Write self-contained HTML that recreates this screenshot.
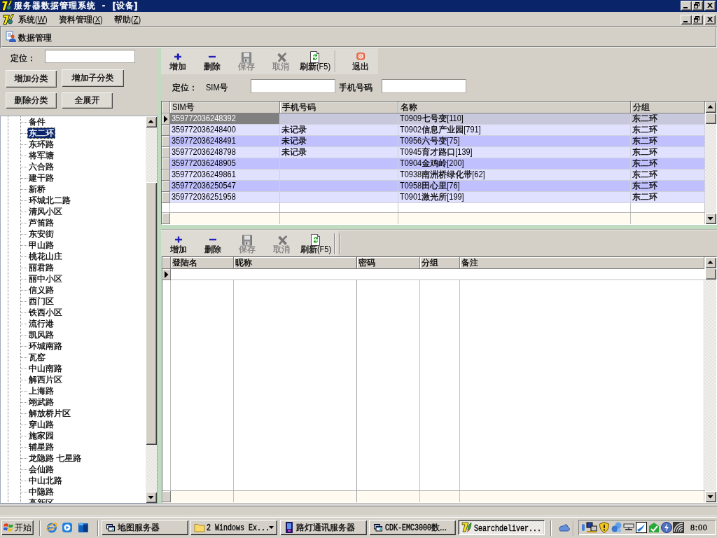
<!DOCTYPE html><html><head><meta charset="utf-8"><title>服务器数据管理系统</title><style>
html,body{margin:0;padding:0;background:#d4d0c8;overflow:hidden;}
body{width:717px;height:538px;position:relative;}
#s{position:absolute;left:0;top:0;width:1024px;height:768px;transform-origin:0 0;transform:scale(0.70019,0.70052);will-change:transform;background:#d4d0c8;font-family:"Liberation Sans","WenQuanYi Zen Hei","Noto Sans CJK SC",sans-serif;font-size:12px;color:#000;overflow:hidden;line-height:14px;-webkit-text-stroke:0.3px currentColor;}
#s div,#s span{position:absolute;box-sizing:border-box;white-space:nowrap;}
#s span.t{position:static;}
.raised{background:#d4d0c8;box-shadow:inset 1px 1px 0 #fff,inset -1px -1px 0 #404040,inset 2px 2px 0 #d4d0c8,inset -2px -2px 0 #808080;}
.raised2{background:#d4d0c8;box-shadow:inset 1px 1px 0 #d4d0c8,inset -1px -1px 0 #404040,inset 2px 2px 0 #fff,inset -2px -2px 0 #808080;}
.sunken{background:#fff;box-shadow:inset 1px 1px 0 #808080,inset -1px -1px 0 #fff,inset 2px 2px 0 #404040,inset -2px -2px 0 #d4d0c8;}
.btn{text-align:center;line-height:24px;}
.pb{background:#dedbd5;box-shadow:inset 1px 1px 0 #f6f5f2,inset -1px -1px 0 #484848,inset -2px -2px 0 #b4b0a8;}
.inp{background:#fff;border:1px solid #908e88;border-right-color:#a8a6a0;border-bottom-color:#a8a6a0;}
.gr{background:#fff;border:1px solid #686868;border-right-color:#fff;border-bottom-color:#fff;overflow:hidden;}
.cb{width:16px;height:14px;}
.sb{background-color:#e2dfd9;background-image:linear-gradient(45deg,#f6f5f3 25%,transparent 25%,transparent 75%,#f6f5f3 75%),linear-gradient(45deg,#f6f5f3 25%,transparent 25%,transparent 75%,#f6f5f3 75%);background-size:2px 2px;background-position:0 0,1px 1px;}
.sbb{width:16px;height:16px;}
.hd{background:#d4d0c8;border-right:1px solid #808080;border-bottom:1px solid #808080;box-shadow:inset 1px 1px 0 #fff;height:17px;top:0;line-height:17px;padding-left:3px;overflow:hidden;}
.ind{background:#d4d0c8;border-right:1px solid #808080;border-bottom:1px solid #808080;box-shadow:inset 1px 1px 0 #fff;left:0;width:13px;height:16px;}
.c{height:16px;line-height:15px;padding-left:2px;border-right:1px solid #d0d0dc;border-bottom:1px solid #d0d0dc;overflow:hidden;}
.tl{font-size:12px;text-align:center;line-height:14px;}
.dis{color:#808080;}
u{text-decoration:underline;}
#s span.l{font-size:11px;display:inline-block;transform:scaleY(1.2);transform-origin:0 75%;-webkit-text-stroke:0;}
</style></head><body><div id="s">
<div style="left:0;top:0;width:1024px;height:17px;background:#0a246a;"></div>
<svg style="position:absolute;left:2px;top:0px" width="16" height="16" viewBox="0 0 16 16"><path d="M1 1.500h8.500l-4.500 13.500h-4l3.500-10.500h-3.500z" fill="#f8f000" stroke="#201800" stroke-width="1"/><path d="M13 0.500h2.500l-4.500 9h-2.500z" fill="#f8f000" stroke="#201800" stroke-width="0.800"/><circle cx="10.500" cy="11" r="3" fill="#2a9a50" stroke="#103060" stroke-width="0.800"/><path d="M9 10.500a2 2 0 0 1 3 0" stroke="#4060d0" stroke-width="1.200" fill="none"/></svg>
<div style="left:20px;top:0px;color:#fff;font-weight:bold;font-size:12px;line-height:16px;letter-spacing:1px;-webkit-text-stroke:0.5px #fff">服务器数据管理系统<span class="t" style="margin:0 10px 0 9px">-</span>[设备]</div>
<div class="raised cb" style="left:972px;top:1px"><div style="left:4px;top:9px;width:6px;height:2px;background:#000"></div></div>
<div class="raised cb" style="left:988px;top:1px"><div style="left:5px;top:2px;width:6px;height:6px;border:1px solid #000;border-top-width:2px"></div><div style="left:3px;top:5px;width:6px;height:6px;border:1px solid #000;border-top-width:2px;background:#d4d0c8"></div></div>
<div class="raised cb" style="left:1006px;top:1px"><svg style="position:absolute;left:4px;top:3px" width="8" height="7" viewBox="0 0 8 7"><path d="M0 0h2l2 2 2-2h2l-3 3.5 3 3.5h-2l-2-2-2 2h-2l3-3.5z" fill="#000"/></svg></div>
<svg style="position:absolute;left:4px;top:20px" width="16" height="16" viewBox="0 0 16 16"><path d="M1 1.500h8.500l-4.500 13.500h-4l3.500-10.500h-3.500z" fill="#f8f000" stroke="#201800" stroke-width="1"/><path d="M13 0.500h2.500l-4.500 9h-2.500z" fill="#f8f000" stroke="#201800" stroke-width="0.800"/><circle cx="10.500" cy="11" r="3" fill="#2a9a50" stroke="#103060" stroke-width="0.800"/><path d="M9 10.500a2 2 0 0 1 3 0" stroke="#4060d0" stroke-width="1.200" fill="none"/></svg>
<div style="left:26px;top:20px;line-height:16px">系统<span class="t l">(<u>W</u>)</span></div>
<div style="left:84px;top:20px;line-height:16px">资料管理<span class="t l">(<u>X</u>)</span></div>
<div style="left:163px;top:20px;line-height:16px">帮助<span class="t l">(<u>Z</u>)</span></div>
<div class="raised cb" style="left:972px;top:21px"><div style="left:4px;top:9px;width:6px;height:2px;background:#000"></div></div>
<div class="raised cb" style="left:988px;top:21px"><div style="left:5px;top:2px;width:6px;height:6px;border:1px solid #000;border-top-width:2px"></div><div style="left:3px;top:5px;width:6px;height:6px;border:1px solid #000;border-top-width:2px;background:#d4d0c8"></div></div>
<div class="raised cb" style="left:1006px;top:21px"><svg style="position:absolute;left:4px;top:3px" width="8" height="7" viewBox="0 0 8 7"><path d="M0 0h2l2 2 2-2h2l-3 3.5 3 3.5h-2l-2-2-2 2h-2l3-3.5z" fill="#000"/></svg></div>
<div style="left:0;top:37px;width:1024px;height:31px;box-shadow:inset 1px 1px 0 #808080,inset -1px -1px 0 #f2f1ee,inset 2px 2px 0 #f2f1ee,inset -2px -2px 0 #808080"></div>
<svg style="position:absolute;left:7px;top:44px" width="16" height="17" viewBox="0 0 16 17"><rect x="2" y="1" width="9" height="12" fill="#fff" stroke="#5080c0" stroke-width="1"/><path d="M4 4h5M4 6h5M4 8h5" stroke="#7090c0" stroke-width="1"/><circle cx="11" cy="8" r="2.5" fill="#e05020"/><path d="M6 16c0-4 2-5 5-5s5 1 5 5z" fill="#3060c0"/></svg>
<div style="left:26px;top:46px;line-height:16px">数据管理</div>
<div style="left:15px;top:75px;line-height:16px">定位：</div>
<div class="inp" style="left:64px;top:71px;width:129px;height:19px"></div>
<div class="pb btn" style="left:8px;top:100px;width:73px;height:25px">增加分类</div>
<div class="pb btn" style="left:88px;top:99px;width:89px;height:25px">增加子分类</div>
<div class="pb btn" style="left:8px;top:132px;width:73px;height:23px;line-height:22px">删除分类</div>
<div class="pb btn" style="left:88px;top:132px;width:73px;height:23px;line-height:22px">全展开</div>
<div style="left:0;top:165px;width:225px;height:554px;overflow:hidden;background:#fff;border:1px solid #a0a8b8">
<div style="left:10px;top:0;width:1px;height:552px;background-image:linear-gradient(to bottom,#808080 50%,transparent 50%);background-size:1px 2px;"></div>
<div style="left:28px;top:0;width:1px;height:552px;background-image:linear-gradient(to bottom,#808080 50%,transparent 50%);background-size:1px 2px;"></div>
<div style="left:29px;top:8px;width:9px;height:1px;background-image:linear-gradient(to right,#989898 50%,transparent 50%);background-size:2px 1px;"></div>
<div style="left:38px;top:0px;height:16px;line-height:16px;padding:0 2px;">备件</div>
<div style="left:29px;top:24px;width:9px;height:1px;background-image:linear-gradient(to right,#989898 50%,transparent 50%);background-size:2px 1px;"></div>
<div style="left:38px;top:16px;height:16px;line-height:16px;padding:0 2px;background:#0a246a;color:#fff;outline:1px dotted #d8c870;outline-offset:-1px">东二环</div>
<div style="left:29px;top:40px;width:9px;height:1px;background-image:linear-gradient(to right,#989898 50%,transparent 50%);background-size:2px 1px;"></div>
<div style="left:38px;top:32px;height:16px;line-height:16px;padding:0 2px;">东环路</div>
<div style="left:29px;top:56px;width:9px;height:1px;background-image:linear-gradient(to right,#989898 50%,transparent 50%);background-size:2px 1px;"></div>
<div style="left:38px;top:48px;height:16px;line-height:16px;padding:0 2px;">将军塘</div>
<div style="left:29px;top:72px;width:9px;height:1px;background-image:linear-gradient(to right,#989898 50%,transparent 50%);background-size:2px 1px;"></div>
<div style="left:38px;top:64px;height:16px;line-height:16px;padding:0 2px;">六合路</div>
<div style="left:29px;top:88px;width:9px;height:1px;background-image:linear-gradient(to right,#989898 50%,transparent 50%);background-size:2px 1px;"></div>
<div style="left:38px;top:80px;height:16px;line-height:16px;padding:0 2px;">建干路</div>
<div style="left:29px;top:104px;width:9px;height:1px;background-image:linear-gradient(to right,#989898 50%,transparent 50%);background-size:2px 1px;"></div>
<div style="left:38px;top:96px;height:16px;line-height:16px;padding:0 2px;">新桥</div>
<div style="left:29px;top:120px;width:9px;height:1px;background-image:linear-gradient(to right,#989898 50%,transparent 50%);background-size:2px 1px;"></div>
<div style="left:38px;top:112px;height:16px;line-height:16px;padding:0 2px;">环城北二路</div>
<div style="left:29px;top:136px;width:9px;height:1px;background-image:linear-gradient(to right,#989898 50%,transparent 50%);background-size:2px 1px;"></div>
<div style="left:38px;top:128px;height:16px;line-height:16px;padding:0 2px;">清风小区</div>
<div style="left:29px;top:152px;width:9px;height:1px;background-image:linear-gradient(to right,#989898 50%,transparent 50%);background-size:2px 1px;"></div>
<div style="left:38px;top:144px;height:16px;line-height:16px;padding:0 2px;">芦笛路</div>
<div style="left:29px;top:168px;width:9px;height:1px;background-image:linear-gradient(to right,#989898 50%,transparent 50%);background-size:2px 1px;"></div>
<div style="left:38px;top:160px;height:16px;line-height:16px;padding:0 2px;">东安街</div>
<div style="left:29px;top:184px;width:9px;height:1px;background-image:linear-gradient(to right,#989898 50%,transparent 50%);background-size:2px 1px;"></div>
<div style="left:38px;top:176px;height:16px;line-height:16px;padding:0 2px;">甲山路</div>
<div style="left:29px;top:200px;width:9px;height:1px;background-image:linear-gradient(to right,#989898 50%,transparent 50%);background-size:2px 1px;"></div>
<div style="left:38px;top:192px;height:16px;line-height:16px;padding:0 2px;">桃花山庄</div>
<div style="left:29px;top:216px;width:9px;height:1px;background-image:linear-gradient(to right,#989898 50%,transparent 50%);background-size:2px 1px;"></div>
<div style="left:38px;top:208px;height:16px;line-height:16px;padding:0 2px;">丽君路</div>
<div style="left:29px;top:232px;width:9px;height:1px;background-image:linear-gradient(to right,#989898 50%,transparent 50%);background-size:2px 1px;"></div>
<div style="left:38px;top:224px;height:16px;line-height:16px;padding:0 2px;">丽中小区</div>
<div style="left:29px;top:248px;width:9px;height:1px;background-image:linear-gradient(to right,#989898 50%,transparent 50%);background-size:2px 1px;"></div>
<div style="left:38px;top:240px;height:16px;line-height:16px;padding:0 2px;">信义路</div>
<div style="left:29px;top:264px;width:9px;height:1px;background-image:linear-gradient(to right,#989898 50%,transparent 50%);background-size:2px 1px;"></div>
<div style="left:38px;top:256px;height:16px;line-height:16px;padding:0 2px;">西门区</div>
<div style="left:29px;top:280px;width:9px;height:1px;background-image:linear-gradient(to right,#989898 50%,transparent 50%);background-size:2px 1px;"></div>
<div style="left:38px;top:272px;height:16px;line-height:16px;padding:0 2px;">铁西小区</div>
<div style="left:29px;top:296px;width:9px;height:1px;background-image:linear-gradient(to right,#989898 50%,transparent 50%);background-size:2px 1px;"></div>
<div style="left:38px;top:288px;height:16px;line-height:16px;padding:0 2px;">流行港</div>
<div style="left:29px;top:312px;width:9px;height:1px;background-image:linear-gradient(to right,#989898 50%,transparent 50%);background-size:2px 1px;"></div>
<div style="left:38px;top:304px;height:16px;line-height:16px;padding:0 2px;">凯风路</div>
<div style="left:29px;top:328px;width:9px;height:1px;background-image:linear-gradient(to right,#989898 50%,transparent 50%);background-size:2px 1px;"></div>
<div style="left:38px;top:320px;height:16px;line-height:16px;padding:0 2px;">环城南路</div>
<div style="left:29px;top:344px;width:9px;height:1px;background-image:linear-gradient(to right,#989898 50%,transparent 50%);background-size:2px 1px;"></div>
<div style="left:38px;top:336px;height:16px;line-height:16px;padding:0 2px;">瓦窑</div>
<div style="left:29px;top:360px;width:9px;height:1px;background-image:linear-gradient(to right,#989898 50%,transparent 50%);background-size:2px 1px;"></div>
<div style="left:38px;top:352px;height:16px;line-height:16px;padding:0 2px;">中山南路</div>
<div style="left:29px;top:376px;width:9px;height:1px;background-image:linear-gradient(to right,#989898 50%,transparent 50%);background-size:2px 1px;"></div>
<div style="left:38px;top:368px;height:16px;line-height:16px;padding:0 2px;">解西片区</div>
<div style="left:29px;top:392px;width:9px;height:1px;background-image:linear-gradient(to right,#989898 50%,transparent 50%);background-size:2px 1px;"></div>
<div style="left:38px;top:384px;height:16px;line-height:16px;padding:0 2px;">上海路</div>
<div style="left:29px;top:408px;width:9px;height:1px;background-image:linear-gradient(to right,#989898 50%,transparent 50%);background-size:2px 1px;"></div>
<div style="left:38px;top:400px;height:16px;line-height:16px;padding:0 2px;">翊武路</div>
<div style="left:29px;top:424px;width:9px;height:1px;background-image:linear-gradient(to right,#989898 50%,transparent 50%);background-size:2px 1px;"></div>
<div style="left:38px;top:416px;height:16px;line-height:16px;padding:0 2px;">解放桥片区</div>
<div style="left:29px;top:440px;width:9px;height:1px;background-image:linear-gradient(to right,#989898 50%,transparent 50%);background-size:2px 1px;"></div>
<div style="left:38px;top:432px;height:16px;line-height:16px;padding:0 2px;">穿山路</div>
<div style="left:29px;top:456px;width:9px;height:1px;background-image:linear-gradient(to right,#989898 50%,transparent 50%);background-size:2px 1px;"></div>
<div style="left:38px;top:448px;height:16px;line-height:16px;padding:0 2px;">施家园</div>
<div style="left:29px;top:472px;width:9px;height:1px;background-image:linear-gradient(to right,#989898 50%,transparent 50%);background-size:2px 1px;"></div>
<div style="left:38px;top:464px;height:16px;line-height:16px;padding:0 2px;">辅星路</div>
<div style="left:29px;top:488px;width:9px;height:1px;background-image:linear-gradient(to right,#989898 50%,transparent 50%);background-size:2px 1px;"></div>
<div style="left:38px;top:480px;height:16px;line-height:16px;padding:0 2px;">龙隐路 七星路</div>
<div style="left:29px;top:504px;width:9px;height:1px;background-image:linear-gradient(to right,#989898 50%,transparent 50%);background-size:2px 1px;"></div>
<div style="left:38px;top:496px;height:16px;line-height:16px;padding:0 2px;">会仙路</div>
<div style="left:29px;top:520px;width:9px;height:1px;background-image:linear-gradient(to right,#989898 50%,transparent 50%);background-size:2px 1px;"></div>
<div style="left:38px;top:512px;height:16px;line-height:16px;padding:0 2px;">中山北路</div>
<div style="left:29px;top:536px;width:9px;height:1px;background-image:linear-gradient(to right,#989898 50%,transparent 50%);background-size:2px 1px;"></div>
<div style="left:38px;top:528px;height:16px;line-height:16px;padding:0 2px;">中隐路</div>
<div style="left:29px;top:552px;width:9px;height:1px;background-image:linear-gradient(to right,#989898 50%,transparent 50%);background-size:2px 1px;"></div>
<div style="left:38px;top:544px;height:16px;line-height:16px;padding:0 2px;">高新区</div>
<div class="sb" style="left:207px;top:0px;width:16px;height:552px"><div class="raised sbb" style="left:0;top:0"><svg style="position:absolute;left:3px;top:5px" width="9" height="4.500" viewBox="0 0 9 5" preserveAspectRatio="none"><path d="M0.500 5h8l-4-5z" fill="#000"/></svg></div><div class="raised" style="left:0;top:94px;width:16px;height:375px"></div><div class="raised sbb" style="left:0;top:536px"><svg style="position:absolute;left:3px;top:6px" width="9" height="4.500" viewBox="0 0 9 5" preserveAspectRatio="none"><path d="M0.500 0h8l-4 5z" fill="#000"/></svg></div></div>
</div>
<div style="left:225px;top:68px;width:5px;height:651px;background:#c0dcc0"></div>
<div style="left:230px;top:69px;width:310px;height:37px;background:#dedbd5"></div>
<div style="left:254px;top:69px;width:60px;height:36px;margin-left:-30px"><div style="left:22px;top:4px;width:16px;height:16px"><svg width="16" height="16" viewBox="0 0 16 16"><path d="M8 3.500v9M3 8h10" stroke="#2222bb" stroke-width="2.400"/></svg></div><div class="tl" style="left:0;top:19px;width:60px">增加</div></div>
<div style="left:303px;top:69px;width:60px;height:36px;margin-left:-30px"><div style="left:22px;top:4px;width:16px;height:16px"><svg width="16" height="16" viewBox="0 0 16 16"><path d="M3 8h10" stroke="#2222bb" stroke-width="2.400"/></svg></div><div class="tl" style="left:0;top:19px;width:60px">删除</div></div>
<div style="left:352px;top:69px;width:60px;height:36px;margin-left:-30px"><div style="left:22px;top:4px;width:16px;height:16px"><svg width="16" height="17" viewBox="0 0 16 17"><path d="M1.500 2h13v14h-12l-1-1z" fill="#8c8c8c" stroke="#707070" stroke-width="1"/><rect x="4" y="2.500" width="8" height="5.500" fill="#e0e0e0"/><rect x="4.500" y="10.500" width="7" height="5.500" fill="#d0d0d0"/><rect x="6" y="11.500" width="2.200" height="3.500" fill="#707070"/></svg></div><div class="tl dis" style="left:0;top:19px;width:60px">保存</div></div>
<div style="left:401px;top:69px;width:60px;height:36px;margin-left:-30px"><div style="left:22px;top:4px;width:16px;height:16px"><svg width="18" height="17" viewBox="0 0 18 17" style="overflow:visible"><path d="M4.500 4l10 10.500" stroke="#787878" stroke-width="3.800"/><path d="M15.500 3c-4 3-7 7-10.500 12" stroke="#787878" stroke-width="2.800" fill="none"/></svg></div><div class="tl dis" style="left:0;top:19px;width:60px">取消</div></div>
<div style="left:450px;top:69px;width:60px;height:36px;margin-left:-30px"><div style="left:22px;top:4px;width:16px;height:16px"><svg width="16" height="17" viewBox="0 0 16 17"><path d="M1.500 0.500h9l3 3v13h-12z" fill="#fff" stroke="#505050"/><path d="M10.500 0.500v3h3" fill="#e0e0e0" stroke="#505050"/><path d="M5 7.500a3.200 3.200 0 0 1 5-2.500l1-1v3.500h-3.500l1.200-1.200a1.800 1.800 0 0 0-2.400 1.200z" fill="#18a018"/><path d="M11 9.500a3.200 3.200 0 0 1-5 2.500l-1 1v-3.500h3.500l-1.200 1.200a1.800 1.800 0 0 0 2.400-1.200z" fill="#18a018"/></svg></div><div class="tl" style="left:0;top:19px;width:60px">刷新<span class="t l">(F5)</span></div></div>
<div style="left:478px;top:72px;width:2px;height:31px;border-left:1px solid #808080;border-right:1px solid #fff"></div>
<div style="left:515px;top:69px;width:60px;height:36px;margin-left:-30px"><div style="left:22px;top:4px;width:16px;height:16px"><svg width="16" height="16" viewBox="0 0 16 16"><rect x="3" y="2.500" width="10.500" height="9.500" rx="2" fill="#f47c5c" stroke="#e4573a"/><circle cx="8.200" cy="7.200" r="2.600" fill="none" stroke="#fff" stroke-width="1.300"/><circle cx="8.200" cy="7.200" r="0.900" fill="#fff"/></svg></div><div class="tl" style="left:0;top:19px;width:60px">退出</div></div>
<div style="left:246px;top:117px;line-height:16px">定位：</div>
<div style="left:294px;top:117px;line-height:16px"><span class="t l">SIM</span>号</div>
<div class="inp" style="left:358px;top:113px;width:121px;height:20px"></div>
<div style="left:484px;top:117px;line-height:16px">手机号码</div>
<div class="inp" style="left:545px;top:113px;width:121px;height:20px"></div>
<div class="gr" style="left:230px;top:144px;width:794px;height:177px">
<div style="left:0;top:0;width:776px;height:175px;background:#fff;overflow:hidden">
<div class="hd" style="left:0px;width:12px;padding-left:3px"></div>
<div class="hd" style="left:12px;width:157px;padding-left:3px"><span class="t l">SIM</span>号</div>
<div class="hd" style="left:169px;width:169px;padding-left:3px">手机号码</div>
<div class="hd" style="left:338px;width:332px;padding-left:3px">名称</div>
<div class="hd" style="left:670px;width:106px;padding-left:3px">分组</div>
<div class="ind" style="top:17px;width:12px"><svg style="position:absolute;left:3px;top:3px" width="6" height="10" viewBox="0 0 6 10"><path d="M0 0l5.500 5-5.500 5z" fill="#000"/></svg></div>
<div class="c" style="left:12px;top:17px;width:157px;background:#c8c8dc;background:#808080;color:#fff;"><span class="t l">359772036248392</span></div>
<div class="c" style="left:169px;top:17px;width:169px;background:#c8c8dc;"></div>
<div class="c" style="left:338px;top:17px;width:332px;background:#c8c8dc;"><span class="t l">T0909</span>七号变<span class="t l">[110]</span></div>
<div class="c" style="left:670px;top:17px;width:106px;background:#c8c8dc;">东二环</div>
<div class="ind" style="top:33px;width:12px"></div>
<div class="c" style="left:12px;top:33px;width:157px;background:#e0e0ff;"><span class="t l">359772036248400</span></div>
<div class="c" style="left:169px;top:33px;width:169px;background:#e0e0ff;">未记录</div>
<div class="c" style="left:338px;top:33px;width:332px;background:#e0e0ff;"><span class="t l">T0902</span>信息产业园<span class="t l">[791]</span></div>
<div class="c" style="left:670px;top:33px;width:106px;background:#e0e0ff;">东二环</div>
<div class="ind" style="top:49px;width:12px"></div>
<div class="c" style="left:12px;top:49px;width:157px;background:#c0c0ff;"><span class="t l">359772036248491</span></div>
<div class="c" style="left:169px;top:49px;width:169px;background:#c0c0ff;">未记录</div>
<div class="c" style="left:338px;top:49px;width:332px;background:#c0c0ff;"><span class="t l">T0956</span>六号变<span class="t l">[75]</span></div>
<div class="c" style="left:670px;top:49px;width:106px;background:#c0c0ff;">东二环</div>
<div class="ind" style="top:65px;width:12px"></div>
<div class="c" style="left:12px;top:65px;width:157px;background:#e0e0ff;"><span class="t l">359772036248798</span></div>
<div class="c" style="left:169px;top:65px;width:169px;background:#e0e0ff;">未记录</div>
<div class="c" style="left:338px;top:65px;width:332px;background:#e0e0ff;"><span class="t l">T0945</span>育才路口<span class="t l">[139]</span></div>
<div class="c" style="left:670px;top:65px;width:106px;background:#e0e0ff;">东二环</div>
<div class="ind" style="top:81px;width:12px"></div>
<div class="c" style="left:12px;top:81px;width:157px;background:#c0c0ff;"><span class="t l">359772036248905</span></div>
<div class="c" style="left:169px;top:81px;width:169px;background:#c0c0ff;"></div>
<div class="c" style="left:338px;top:81px;width:332px;background:#c0c0ff;"><span class="t l">T0904</span>金鸡岭<span class="t l">[200]</span></div>
<div class="c" style="left:670px;top:81px;width:106px;background:#c0c0ff;">东二环</div>
<div class="ind" style="top:97px;width:12px"></div>
<div class="c" style="left:12px;top:97px;width:157px;background:#e0e0ff;"><span class="t l">359772036249861</span></div>
<div class="c" style="left:169px;top:97px;width:169px;background:#e0e0ff;"></div>
<div class="c" style="left:338px;top:97px;width:332px;background:#e0e0ff;"><span class="t l">T0938</span>南洲桥绿化带<span class="t l">[62]</span></div>
<div class="c" style="left:670px;top:97px;width:106px;background:#e0e0ff;">东二环</div>
<div class="ind" style="top:113px;width:12px"></div>
<div class="c" style="left:12px;top:113px;width:157px;background:#c0c0ff;"><span class="t l">359772036250547</span></div>
<div class="c" style="left:169px;top:113px;width:169px;background:#c0c0ff;"></div>
<div class="c" style="left:338px;top:113px;width:332px;background:#c0c0ff;"><span class="t l">T0958</span>田心里<span class="t l">[76]</span></div>
<div class="c" style="left:670px;top:113px;width:106px;background:#c0c0ff;">东二环</div>
<div class="ind" style="top:129px;width:12px"></div>
<div class="c" style="left:12px;top:129px;width:157px;background:#e0e0ff;"><span class="t l">359772036251958</span></div>
<div class="c" style="left:169px;top:129px;width:169px;background:#e0e0ff;"></div>
<div class="c" style="left:338px;top:129px;width:332px;background:#e0e0ff;"><span class="t l">T0901</span>激光所<span class="t l">[199]</span></div>
<div class="c" style="left:670px;top:129px;width:106px;background:#e0e0ff;">东二环</div>
<div style="left:11px;top:145px;width:1px;height:30px;background:#c0c0c0"></div>
<div style="left:168px;top:145px;width:1px;height:30px;background:#c0c0c0"></div>
<div style="left:337px;top:145px;width:1px;height:30px;background:#c0c0c0"></div>
<div style="left:669px;top:145px;width:1px;height:30px;background:#c0c0c0"></div>
<div style="left:775px;top:145px;width:1px;height:30px;background:#c0c0c0"></div>
<div style="left:0;top:158px;width:776px;height:17px;background:#fffbf0;border-top:1px solid #b0b0b0"></div>
<div class="ind" style="top:159px;width:12px;height:16px"></div>
<div style="left:168px;top:159px;width:1px;height:16px;background:#c0c0c0"></div>
<div style="left:337px;top:159px;width:1px;height:16px;background:#c0c0c0"></div>
<div style="left:669px;top:159px;width:1px;height:16px;background:#c0c0c0"></div>
<div style="left:775px;top:159px;width:1px;height:16px;background:#c0c0c0"></div>
</div>
<div class="sb" style="left:776px;top:0px;width:16px;height:175px"><div class="raised sbb" style="left:0;top:0"><svg style="position:absolute;left:3px;top:5px" width="9" height="4.500" viewBox="0 0 9 5" preserveAspectRatio="none"><path d="M0.500 5h8l-4-5z" fill="#000"/></svg></div><div class="raised" style="left:0;top:16px;width:16px;height:16px"></div><div class="raised sbb" style="left:0;top:159px"><svg style="position:absolute;left:3px;top:6px" width="9" height="4.500" viewBox="0 0 9 5" preserveAspectRatio="none"><path d="M0.500 0h8l-4 5z" fill="#000"/></svg></div></div>
</div>
<div style="left:230px;top:321px;width:794px;height:6px;background:#c0dcc0"></div>
<div style="left:230px;top:327px;width:794px;height:1px;background:#b4b1aa"></div>
<div style="left:230px;top:328px;width:794px;height:1px;background:#ecebe7"></div>
<div style="left:230px;top:329px;width:253px;height:37px;background:#dedbd5"></div>
<div style="left:255px;top:330px;width:60px;height:36px;margin-left:-30px"><div style="left:22px;top:4px;width:16px;height:16px"><svg width="16" height="16" viewBox="0 0 16 16"><path d="M8 3.500v9M3 8h10" stroke="#2222bb" stroke-width="2.400"/></svg></div><div class="tl" style="left:0;top:19px;width:60px">增加</div></div>
<div style="left:304px;top:330px;width:60px;height:36px;margin-left:-30px"><div style="left:22px;top:4px;width:16px;height:16px"><svg width="16" height="16" viewBox="0 0 16 16"><path d="M3 8h10" stroke="#2222bb" stroke-width="2.400"/></svg></div><div class="tl" style="left:0;top:19px;width:60px">删除</div></div>
<div style="left:353px;top:330px;width:60px;height:36px;margin-left:-30px"><div style="left:22px;top:4px;width:16px;height:16px"><svg width="16" height="17" viewBox="0 0 16 17"><path d="M1.500 2h13v14h-12l-1-1z" fill="#8c8c8c" stroke="#707070" stroke-width="1"/><rect x="4" y="2.500" width="8" height="5.500" fill="#e0e0e0"/><rect x="4.500" y="10.500" width="7" height="5.500" fill="#d0d0d0"/><rect x="6" y="11.500" width="2.200" height="3.500" fill="#707070"/></svg></div><div class="tl dis" style="left:0;top:19px;width:60px">保存</div></div>
<div style="left:402px;top:330px;width:60px;height:36px;margin-left:-30px"><div style="left:22px;top:4px;width:16px;height:16px"><svg width="18" height="17" viewBox="0 0 18 17" style="overflow:visible"><path d="M4.500 4l10 10.500" stroke="#787878" stroke-width="3.800"/><path d="M15.500 3c-4 3-7 7-10.500 12" stroke="#787878" stroke-width="2.800" fill="none"/></svg></div><div class="tl dis" style="left:0;top:19px;width:60px">取消</div></div>
<div style="left:451px;top:330px;width:60px;height:36px;margin-left:-30px"><div style="left:22px;top:4px;width:16px;height:16px"><svg width="16" height="17" viewBox="0 0 16 17"><path d="M1.500 0.500h9l3 3v13h-12z" fill="#fff" stroke="#505050"/><path d="M10.500 0.500v3h3" fill="#e0e0e0" stroke="#505050"/><path d="M5 7.500a3.200 3.200 0 0 1 5-2.500l1-1v3.500h-3.500l1.200-1.200a1.800 1.800 0 0 0-2.400 1.200z" fill="#18a018"/><path d="M11 9.500a3.200 3.200 0 0 1-5 2.500l-1 1v-3.500h3.500l-1.200 1.200a1.800 1.800 0 0 0 2.400-1.200z" fill="#18a018"/></svg></div><div class="tl" style="left:0;top:19px;width:60px">刷新<span class="t l">(F5)</span></div></div>
<div style="left:477px;top:333px;width:2px;height:30px;border-left:1px solid #808080;border-right:1px solid #fff"></div>
<div style="left:484px;top:333px;width:2px;height:30px;border-left:1px solid #808080;border-right:1px solid #fff"></div>
<div class="gr" style="left:231px;top:366px;width:793px;height:352px">
<div style="left:0;top:0;width:775px;height:350px;background:#fff;overflow:hidden">
<div class="hd" style="left:0px;width:12px;padding-left:2px"></div>
<div class="hd" style="left:12px;width:90px;padding-left:2px">登陆名</div>
<div class="hd" style="left:102px;width:176px;padding-left:2px">昵称</div>
<div class="hd" style="left:278px;width:90px;padding-left:2px">密码</div>
<div class="hd" style="left:368px;width:57px;padding-left:2px">分组</div>
<div class="hd" style="left:425px;width:349px;padding-left:2px">备注</div>
<div class="ind" style="top:17px;width:12px"><svg style="position:absolute;left:3px;top:3px" width="6" height="10" viewBox="0 0 6 10"><path d="M0 0l5.500 5-5.500 5z" fill="#000"/></svg></div>
<div style="left:12px;top:32px;width:763px;height:1px;background:#c0c0c0"></div>
<div style="left:11px;top:33px;width:1px;height:317px;background:#c0c0c0"></div>
<div style="left:101px;top:33px;width:1px;height:317px;background:#c0c0c0"></div>
<div style="left:277px;top:33px;width:1px;height:317px;background:#c0c0c0"></div>
<div style="left:367px;top:33px;width:1px;height:317px;background:#c0c0c0"></div>
<div style="left:424px;top:33px;width:1px;height:317px;background:#c0c0c0"></div>
<div style="left:773px;top:33px;width:1px;height:317px;background:#c0c0c0"></div>
<div style="left:0;top:333px;width:775px;height:17px;background:#fffbf0;border-top:1px solid #b0b0b0"></div>
<div class="ind" style="top:334px;width:12px;height:16px"></div>
<div style="left:101px;top:334px;width:1px;height:16px;background:#c0c0c0"></div>
<div style="left:277px;top:334px;width:1px;height:16px;background:#c0c0c0"></div>
<div style="left:367px;top:334px;width:1px;height:16px;background:#c0c0c0"></div>
<div style="left:424px;top:334px;width:1px;height:16px;background:#c0c0c0"></div>
<div style="left:773px;top:334px;width:1px;height:16px;background:#c0c0c0"></div>
</div>
<div class="sb" style="left:775px;top:0px;width:16px;height:350px"><div class="raised sbb" style="left:0;top:0"><svg style="position:absolute;left:3px;top:5px" width="9" height="4.500" viewBox="0 0 9 5" preserveAspectRatio="none"><path d="M0.500 5h8l-4-5z" fill="#000"/></svg></div><div class="raised" style="left:0;top:16px;width:16px;height:16px"></div><div class="raised sbb" style="left:0;top:334px"><svg style="position:absolute;left:3px;top:6px" width="9" height="4.500" viewBox="0 0 9 5" preserveAspectRatio="none"><path d="M0.500 0h8l-4 5z" fill="#000"/></svg></div></div>
</div>
<div style="left:0;top:719px;width:1024px;height:1px;background:#a0a0a0"></div>
<div style="left:0;top:720px;width:1024px;height:1px;background:#f4f3f0"></div>
<div style="left:0;top:722px;width:1024px;height:15px;border-top:1px solid #909090;border-bottom:1px solid #f0efec"></div>
<div style="left:0;top:738px;width:1024px;height:30px;background:#d4d0c8;border-top:1px solid #fff;"></div>
<div class="raised" style="left:2px;top:742px;width:46px;height:22px"><svg style="position:absolute;left:3px;top:3px" width="16" height="16" viewBox="0 0 16 16"><path d="M1 3c2-1 4-1 6 0l-1 4c-2-1-4-1-6 0z" fill="#e04020"/><path d="M8 3.5c2 1 4 1 6 0l-1 4c-2 1-4 1-6 0z" fill="#30a030"/><path d="M0 8.5c2-1 4-1 6 0l-1 4c-2-1-4-1-6 0z" fill="#3060d0"/><path d="M7 9c2 1 4 1 6 0l-1 4c-2 1-4 1-6 0z" fill="#f0c020"/></svg><div style="left:19px;top:3px;font-weight:bold;line-height:16px;-webkit-text-stroke:0">开始</div></div>
<div style="left:56px;top:743px;width:2px;height:22px;border-left:1px solid #808080;border-right:1px solid #fff"></div>
<svg style="position:absolute;left:66px;top:745px" width="16" height="16" viewBox="0 0 16 16"><circle cx="8" cy="8.5" r="5.5" fill="none" stroke="#2878d8" stroke-width="3"/><path d="M3 8.5h10" stroke="#2878d8" stroke-width="2"/><ellipse cx="8" cy="7" rx="8" ry="3" transform="rotate(-30 8 7)" fill="none" stroke="#f0b020" stroke-width="1.3"/></svg>
<svg style="position:absolute;left:88px;top:745px" width="16" height="16" viewBox="0 0 16 16"><rect x="1" y="1" width="14" height="14" rx="4" fill="#2080e0"/><circle cx="8" cy="8" r="4.5" fill="#fff"/><path d="M6.5 5.5l4 2.500-4 2.500z" fill="#2080e0"/></svg>
<svg style="position:absolute;left:111px;top:745px" width="16" height="16" viewBox="0 0 16 16"><rect x="1" y="2" width="14" height="13" rx="1" fill="#1060c0"/><rect x="2" y="1" width="6" height="4" fill="#60b0f0"/><rect x="8" y="4" width="6" height="10" fill="#083880"/></svg>
<div style="left:139px;top:743px;width:2px;height:22px;border-left:1px solid #808080;border-right:1px solid #fff"></div>
<div class="raised" style="left:145px;top:742px;width:124px;height:22px;"><div style="left:5px;top:3px;width:16px;height:16px"><svg width="16" height="16" viewBox="0 0 16 16"><rect x="2.500" y="3.500" width="8" height="6.500" fill="#fff" stroke="#000"/><rect x="2.500" y="3.500" width="8" height="1.500" fill="#0a246a"/><rect x="5" y="6.500" width="8.500" height="6.500" fill="#e8f0f8" stroke="#000"/><rect x="5" y="6.500" width="8.500" height="1.500" fill="#0a246a"/><path d="M9 10.500l3-1.500v3z" fill="#20a0c0"/></svg></div><div style="left:23px;top:3px;line-height:16px;">地图服务器</div></div>
<div class="raised" style="left:272px;top:742px;width:124px;height:22px;"><div style="left:5px;top:3px;width:16px;height:16px"><svg width="16" height="16" viewBox="0 0 16 16"><path d="M1 3.500h5l1.500 1.500h7.500v9h-14z" fill="#f8d868" stroke="#b08820"/></svg></div><div style="left:23px;top:3px;line-height:16px;"><span class="t" style="font-family:'Liberation Mono','WenQuanYi Zen Hei',monospace;font-size:10px;display:inline-block;transform:scaleY(1.25);transform-origin:0 70%;">2 Windows Ex...</span></div></div>
<svg style="position:absolute;left:384px;top:751px" width="7" height="4" viewBox="0 0 7 4"><path d="M0 0h7l-3.500 4z" fill="#000"/></svg>
<div class="raised" style="left:400px;top:742px;width:124px;height:22px;"><div style="left:5px;top:3px;width:16px;height:16px"><svg width="16" height="16" viewBox="0 0 16 16"><rect x="3" y="0" width="10" height="16" fill="#181860"/><rect x="5" y="2" width="6" height="8" fill="#6090f0"/><rect x="6" y="11" width="4" height="3" fill="#c040c0"/></svg></div><div style="left:23px;top:3px;line-height:16px;">路灯通讯服务器</div></div>
<div class="raised" style="left:527px;top:742px;width:124px;height:22px;"><div style="left:5px;top:3px;width:16px;height:16px"><svg width="16" height="16" viewBox="0 0 16 16"><rect x="2.500" y="3.500" width="8" height="6.500" fill="#fff" stroke="#000"/><rect x="2.500" y="3.500" width="8" height="1.500" fill="#0a246a"/><rect x="5" y="6.500" width="8.500" height="6.500" fill="#e8f0f8" stroke="#000"/><rect x="5" y="6.500" width="8.500" height="1.500" fill="#0a246a"/><path d="M9 10.500l3-1.500v3z" fill="#20a0c0"/></svg></div><div style="left:23px;top:3px;line-height:16px;"><span class="t" style="font-family:'Liberation Mono','WenQuanYi Zen Hei',monospace;font-size:10px;display:inline-block;transform:scaleY(1.25);transform-origin:0 70%;">CDK-EMC3000</span>数...</div></div>
<div class="sunken sb" style="left:654px;top:742px;width:124px;height:22px;"><div style="left:5px;top:3px;width:16px;height:16px"><svg width="16" height="16" viewBox="0 0 16 16"><path d="M1 1h9l-4 13h-4l3-10h-4z" fill="#f0e020" stroke="#403000" stroke-width="0.8"/><path d="M14 1c-3 2-5 6-5 10l2 1c2-3 3-7 3-11z" fill="#38a038" stroke="#104010" stroke-width="0.6"/><path d="M9 11l-1 4 3-3z" fill="#c03030"/></svg></div><div style="left:23px;top:4px;line-height:16px;"><span class="t" style="font-family:'Liberation Mono','WenQuanYi Zen Hei',monospace;font-size:10px;display:inline-block;transform:scaleY(1.25);transform-origin:0 70%;">Searchdeliver...</span></div></div>
<div style="left:786px;top:743px;width:2px;height:22px;border-left:1px solid #808080;border-right:1px solid #fff"></div>
<svg style="position:absolute;left:797px;top:745px" width="18" height="16" viewBox="0 0 18 16"><path d="M2 9c0-2 3-3 5-3s3-3 5-2 1 3 3 4 2 5-2 5h-9c-2 0-2-2-2-4z" fill="#6890d8" stroke="#3050a0"/></svg>
<div style="left:818px;top:743px;width:2px;height:22px;border-left:1px solid #808080;border-right:1px solid #fff"></div>
<div style="left:826px;top:742px;width:196px;height:22px;box-shadow:inset 1px 1px 0 #808080,inset -1px -1px 0 #fff"></div>
<div style="left:831px;top:748px;width:4px;height:10px;border-radius:2px;background:#4080e0"></div>
<div style="left:837.0px;top:745px;width:16px;height:16px"><svg width="16" height="16" viewBox="0 0 16 16"><rect x="1" y="1" width="8" height="7" fill="#2040a0" stroke="#000"/><rect x="7" y="6" width="8" height="7" fill="#c8c8c8" stroke="#000"/><path d="M1 14h14" stroke="#c09000" stroke-width="2"/></svg></div>
<div style="left:854.8px;top:745px;width:16px;height:16px"><svg width="16" height="16" viewBox="0 0 16 16"><path d="M8 0.500l6.500 2.500c0 6-2 10-6.500 12.500c-4.500-2.500-6.500-6.500-6.500-12.500z" fill="#f0c820" stroke="#705000"/><path d="M8 4v5M8 10.500v2" stroke="#000" stroke-width="1.600"/></svg></div>
<div style="left:872.5px;top:745px;width:16px;height:16px"><svg width="16" height="16" viewBox="0 0 16 16"><circle cx="10" cy="5" r="4.500" fill="#60a0e8"/><circle cx="5" cy="10" r="4.500" fill="#3878d0"/><circle cx="11" cy="12" r="3" fill="#88b8f0"/></svg></div>
<div style="left:890.2px;top:745px;width:16px;height:16px"><svg width="16" height="16" viewBox="0 0 16 16"><rect x="1" y="3" width="14" height="5" fill="#e0e0e0" stroke="#303030"/><rect x="3" y="10" width="10" height="2" fill="#404040"/><path d="M8 8v3" stroke="#000"/></svg></div>
<div style="left:908.0px;top:745px;width:16px;height:16px"><svg width="16" height="16" viewBox="0 0 16 16"><rect x="0.500" y="0.500" width="15" height="15" fill="#fff" stroke="#000"/><path d="M2 11c3-1 6-3 11-8c-2 5-5 9-9 11z" fill="#2878d8"/></svg></div>
<div style="left:925.8px;top:745px;width:16px;height:16px"><svg width="16" height="16" viewBox="0 0 16 16"><path d="M1 6l7-5 7 5v9h-14z" fill="#28a838"/><path d="M4 10l3 3 6-7" stroke="#fff" stroke-width="2" fill="none"/></svg></div>
<div style="left:943.5px;top:745px;width:16px;height:16px"><svg width="16" height="16" viewBox="0 0 16 16"><circle cx="8" cy="8" r="7.500" fill="#5070c0" stroke="#283878"/><path d="M9 2l-4 7h3l-1 5 4-7h-3z" fill="#fff"/></svg></div>
<div style="left:961.2px;top:745px;width:16px;height:16px"><svg width="16" height="16" viewBox="0 0 16 16"><rect x="0" y="0" width="16" height="16" fill="#383838"/><path d="M2 14a12 12 0 0 1 12-12M5 14a9 9 0 0 1 9-9M8 14a6 6 0 0 1 6-6M11 14a3 3 0 0 1 3-3" stroke="#e8e8e8" stroke-width="1.300" fill="none"/></svg></div>
<div style="left:986px;top:745px;line-height:16px;font-family:'Liberation Serif',serif;font-size:12px;letter-spacing:0.8px">8:00</div>
</div></body></html>
